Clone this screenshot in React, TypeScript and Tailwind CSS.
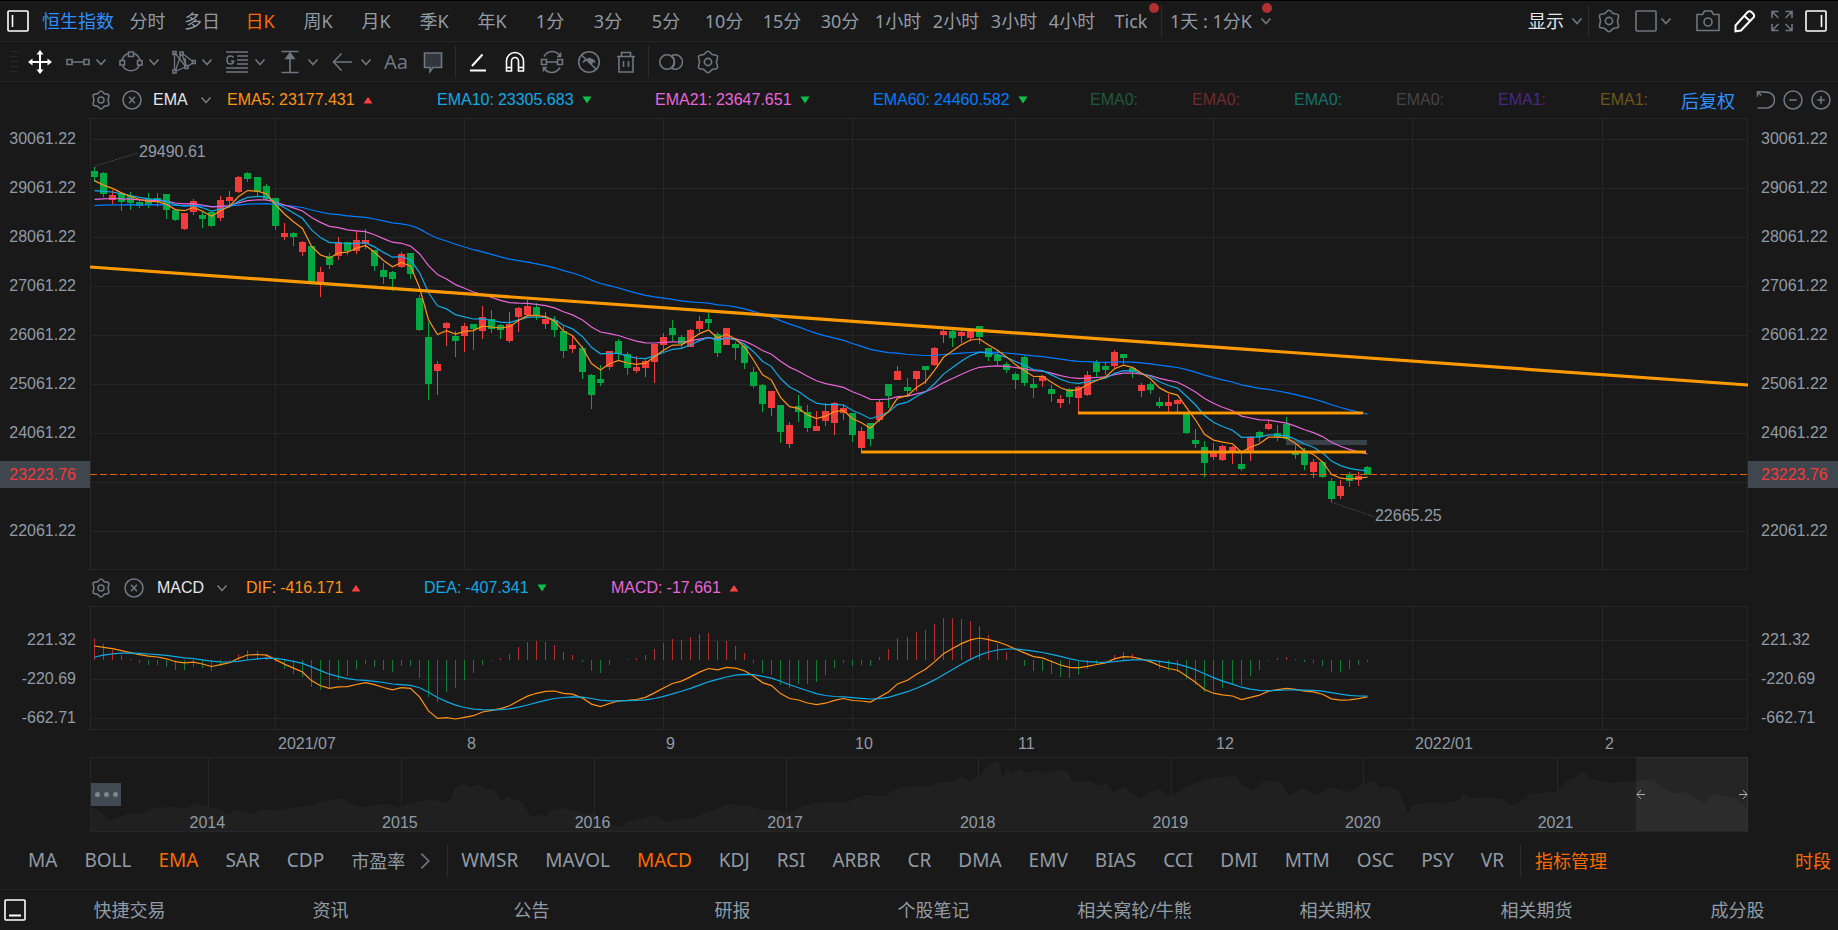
import type { ReactNode } from "react";

type Candle = [dir: "r" | "g", high: number, top: number, bottom: number, low: number];

const CANDLES: Candle[] = [
  ["g", 167, 171, 177, 182], ["g", 172, 173, 194, 197], ["r", 190, 195, 200, 204], ["g", 192, 193, 202, 211],
  ["g", 192, 196, 203, 210], ["g", 199, 202, 206, 208], ["g", 193, 199, 205, 208], ["g", 193, 198, 202, 207],
  ["g", 194, 194, 210, 219], ["g", 209, 210, 220, 221], ["r", 213, 213, 229, 230], ["r", 199, 201, 212, 215],
  ["g", 211, 215, 219, 228], ["g", 211, 212, 226, 227], ["r", 196, 200, 218, 221], ["r", 191, 197, 201, 205],
  ["r", 176, 177, 192, 193], ["g", 172, 173, 179, 182], ["g", 177, 177, 192, 197], ["g", 184, 186, 199, 201],
  ["g", 198, 198, 226, 230], ["r", 223, 233, 237, 240], ["g", 232, 233, 237, 246], ["r", 241, 242, 252, 256],
  ["g", 246, 246, 282, 282], ["r", 267, 272, 282, 297], ["g", 253, 256, 265, 269], ["r", 237, 242, 256, 260],
  ["g", 242, 242, 251, 255], ["r", 231, 240, 251, 254], ["r", 229, 240, 244, 249], ["g", 250, 250, 266, 271],
  ["g", 263, 270, 277, 284], ["g", 271, 272, 279, 291], ["r", 252, 254, 267, 268], ["g", 253, 253, 274, 279],
  ["g", 295, 298, 330, 331], ["g", 322, 337, 384, 400], ["r", 361, 364, 371, 395], ["r", 322, 323, 328, 346],
  ["g", 331, 336, 341, 357], ["r", 323, 326, 336, 352], ["g", 324, 324, 329, 350], ["r", 306, 317, 331, 339],
  ["g", 310, 319, 329, 333], ["g", 324, 325, 330, 339], ["r", 312, 324, 341, 343], ["r", 307, 308, 317, 332],
  ["r", 300, 306, 315, 316], ["g", 303, 307, 315, 320], ["r", 312, 319, 324, 329], ["g", 316, 320, 330, 337],
  ["g", 325, 331, 351, 358], ["r", 336, 345, 349, 353], ["g", 346, 348, 372, 379], ["g", 374, 375, 395, 409],
  ["g", 365, 379, 383, 386], ["r", 351, 351, 367, 370], ["g", 339, 341, 354, 361], ["g", 352, 354, 368, 375],
  ["r", 356, 367, 371, 373], ["r", 358, 361, 368, 377], ["r", 344, 344, 362, 383], ["r", 333, 337, 345, 352],
  ["g", 320, 328, 335, 341], ["g", 335, 337, 344, 348], ["r", 329, 330, 347, 347], ["r", 316, 321, 329, 332],
  ["g", 313, 319, 323, 330], ["g", 332, 334, 353, 357], ["r", 328, 328, 345, 345], ["g", 342, 344, 348, 360],
  ["g", 344, 346, 363, 369], ["g", 367, 372, 386, 388], ["g", 384, 385, 404, 412], ["r", 391, 391, 408, 416],
  ["g", 405, 405, 432, 443], ["r", 422, 425, 444, 448], ["g", 395, 406, 412, 422], ["g", 405, 412, 428, 432],
  ["r", 411, 426, 431, 431], ["r", 403, 411, 421, 426], ["r", 402, 403, 423, 435], ["r", 404, 408, 413, 420],
  ["g", 413, 413, 435, 442], ["r", 427, 431, 448, 453], ["g", 423, 423, 439, 446], ["r", 400, 402, 420, 422],
  ["g", 384, 384, 396, 408], ["r", 366, 371, 380, 380], ["g", 378, 387, 391, 395], ["r", 371, 371, 379, 391],
  ["g", 366, 366, 370, 384], ["r", 347, 348, 365, 366], ["r", 329, 331, 335, 343], ["g", 330, 331, 338, 347],
  ["r", 330, 332, 336, 343], ["r", 330, 331, 338, 341], ["g", 326, 326, 337, 344], ["g", 348, 348, 357, 361],
  ["g", 351, 355, 361, 365], ["g", 362, 364, 370, 373], ["g", 372, 374, 380, 389], ["g", 356, 357, 383, 386],
  ["g", 378, 384, 388, 398], ["r", 375, 376, 381, 387], ["g", 385, 389, 394, 402], ["r", 395, 399, 403, 408],
  ["g", 388, 389, 397, 404], ["r", 386, 387, 398, 413], ["r", 371, 375, 395, 396], ["g", 360, 362, 372, 377],
  ["g", 363, 366, 370, 375], ["r", 350, 352, 366, 368], ["g", 354, 354, 358, 364], ["g", 367, 368, 372, 378],
  ["r", 383, 385, 391, 397], ["g", 382, 384, 390, 394], ["g", 397, 402, 406, 408], ["r", 394, 402, 406, 412],
  ["r", 399, 400, 404, 412], ["g", 412, 412, 433, 434], ["g", 429, 440, 444, 448], ["g", 441, 447, 463, 477],
  ["r", 443, 452, 457, 460], ["r", 445, 446, 460, 461], ["r", 446, 447, 453, 464], ["g", 453, 464, 469, 471],
  ["r", 436, 437, 452, 461], ["g", 431, 432, 437, 442], ["r", 421, 424, 429, 430], ["g", 425, 433, 437, 441],
  ["g", 417, 424, 439, 440], ["g", 445, 453, 455, 459], ["g", 448, 453, 465, 470], ["r", 459, 462, 472, 478],
  ["g", 461, 462, 477, 478], ["g", 478, 481, 499, 502], ["r", 480, 486, 496, 499], ["g", 472, 474, 481, 487],
  ["r", 472, 476, 480, 486], ["g", 466, 467, 475, 475],
];

const NAV_POINTS =
  "91,808 97,809 104,815 110,821 119,817 134,812 142,814 152,808 170,807 186,808 196,803 210,807 221,809 227,814 235,810 245,811 251,815 263,809 277,811 289,808 314,805 322,801 342,798 350,803 360,807 372,805 391,804 397,808 405,805 419,801 435,800 443,803 451,800 455,788 463,783 471,787 478,784 484,788 494,790 502,802 508,797 522,802 530,815 534,818 538,813 546,817 550,810 561,808 573,810 585,813 593,812 601,820 612,825 620,827 628,822 640,818 657,816 665,822 679,819 693,819 703,813 719,808 728,804 746,805 762,810 778,810 786,813 798,808 813,803 845,802 865,795 885,796 900,787 928,786 940,782 952,782 961,776 970,781 980,775 990,764 996,761 1000,765 1002,778 1007,769 1013,774 1019,768 1027,773 1034,770 1047,773 1055,770 1067,771 1072,780 1081,782 1090,781 1097,785 1106,784 1114,792 1124,786 1132,793 1140,799 1148,793 1160,789 1171,797 1185,787 1197,782 1218,777 1236,776 1242,785 1253,790 1265,780 1281,782 1289,796 1303,788 1315,795 1333,787 1346,792 1354,790 1362,784 1374,781 1380,788 1388,786 1400,792 1404,803 1408,813 1412,805 1433,802 1443,804 1459,800 1463,793 1471,798 1491,797 1503,799 1511,805 1526,799 1530,793 1556,792 1566,782 1576,777 1583,771 1590,778 1607,783 1633,781 1653,779 1661,787 1673,793 1685,792 1704,803 1714,794 1734,797 1748,809";

const MONTH_LINES = [275, 464, 663, 852, 1015, 1213, 1412, 1602];
const MONTHS = ["2021/07", "8", "9", "10", "11", "12", "2022/01", "2"];
const PRICE_LINES = [139, 188, 237, 286, 335, 384, 433, 482, 531];
const PRICES = ["30061.22", "29061.22", "28061.22", "27061.22", "26061.22", "25061.22", "24061.22"];
const YEARS = ["2014", "2015", "2016", "2017", "2018", "2019", "2020", "2021"];
const YEAR_LINES = [208, 401, 594, 786, 978, 1171, 1363, 1557];

const PERIODS = [
  "多日", "日K", "周K", "月K", "季K", "年K", "1分", "3分", "5分", "10分", "15分", "30分",
  "1小时", "2小时", "3小时", "4小时",
];
const MAIN_INDICATORS = ["MA", "BOLL", "EMA", "SAR", "CDP"];
const SUB_INDICATORS = [
  "WMSR", "MAVOL", "MACD", "KDJ", "RSI", "ARBR", "CR", "DMA", "EMV", "BIAS", "CCI", "DMI", "MTM",
  "OSC", "PSY", "VR",
];
const PANELS = [
  "快捷交易", "资讯", "公告", "研报", "个股笔记", "相关窝轮/牛熊", "相关期权", "相关期货", "成分股",
];

const candleX = (i: number) => 94 + 9 * i + Math.floor((i + 18) / 36);
const closes = CANDLES.map(([dir, , top, bottom]) => (dir === "r" ? top : bottom));

function ema(values: number[], period: number, first: number) {
  const k = 2 / (period + 1);
  const out = [first];
  for (let i = 1; i < values.length; i++) {
    out.push(out[i - 1] + (values[i] - out[i - 1]) * k);
  }
  return out;
}

const toPoints = (ys: number[]) => ys.map((y, i) => `${candleX(i) + 0.5},${y.toFixed(1)}`).join(" ");

// MACD runs on the candle scale and is then stretched to its own pane
const MACD_ZERO = 660;
const MACD_SCALE = 1.812;
const ema12 = ema(closes, 12, 192.4);
const ema26 = ema(closes, 26, 200.1);
const dif = ema12.map((v, i) => (v - ema26[i]) * MACD_SCALE);
const dea = ema(dif, 9, -3);

function Svg({ size = 24, className = "", children }: { size?: number; className?: string; children: ReactNode }) {
  return (
    <svg
      width={size}
      height={size}
      viewBox="0 0 24 24"
      fill="none"
      stroke="currentColor"
      strokeWidth={size < 24 ? 1.9 : 1.6}
      className={`shrink-0 ${className}`}
      aria-hidden="true"
    >
      {children}
    </svg>
  );
}

function Chevron() {
  return (
    <svg width="12" height="12" viewBox="0 0 12 12" fill="none" stroke="#6f7680" strokeWidth="1.7" className="shrink-0" aria-hidden="true">
      <path d="M1.5 3.500 6 8.500l4.500-5" />
    </svg>
  );
}

function Gear({ size = 24 }: { size?: number }) {
  return (
    <Svg size={size}>
      <path d="M12 1.2c2 0 2.6 2.4 4.3 3.3 1.7.9 4-.1 5 1.5 1 1.700-.8 3.600-.8 6s1.800 4.300.8 6c-1 1.600-3.300.6-5 1.500-1.700.9-2.300 3.300-4.300 3.300s-2.600-2.400-4.300-3.300c-1.700-.9-4 .1-5-1.500-1-1.700.8-3.600.8-6s-1.800-4.300-.8-6c1-1.600 3.300-.6 5-1.500C9.400 3.600 10 1.200 12 1.200Z" />
      <circle cx="12" cy="12" r="3.600" />
    </Svg>
  );
}

function PanelIcon({ children }: { children?: ReactNode }) {
  return (
    <Svg>
      <rect x="2" y="2" width="20" height="20" rx="1" />
      {children}
    </Svg>
  );
}

function CloseIcon() {
  return (
    <Svg size={20}>
      <circle cx="12" cy="12" r="10.800" />
      <path d="m8.500 8 7 8m0-8-7 8" />
    </Svg>
  );
}

function Tool({ label, active, children }: { label: string; active?: boolean; children: ReactNode }) {
  return (
    <button aria-label={label} className={active ? "text-white" : "text-[#6f7680]"}>
      {children}
    </button>
  );
}

function DrawMenu({ label, children }: { label: string; children: ReactNode }) {
  return (
    <button aria-label={label} className="flex items-center gap-[5px] text-[#6f7680]">
      <Svg>{children}</Svg>
      <Chevron />
    </button>
  );
}

function Trend({ up }: { up?: boolean }) {
  return (
    <svg width="10" height="8" viewBox="0 0 10 8" className="ml-1 shrink-0" aria-hidden="true">
      {up ? <path d="M5 1 9.500 7.500h-9z" fill="#ff4040" /> : <path d="M.5 .5h9L5 7.500z" fill="#0bc14c" />}
    </svg>
  );
}

function Reading({ name, value, up, className }: { name: string; value: string; up?: boolean; className: string }) {
  return (
    <div className={`flex shrink-0 items-center gap-1 ${className}`}>
      <span>{name}:</span>
      <span>{value}</span>
      <Trend up={up} />
    </div>
  );
}

function Separator() {
  return <span className="h-8 w-px shrink-0 bg-[#2b2b2b]" />;
}

function TopBar() {
  return (
    <nav className="flex h-[42px] items-center border-y border-t-black border-b-[#262626] text-lg">
      <button aria-label="左侧栏" className="ml-1.5 w-[36px] shrink-0 text-white">
        <PanelIcon>
          <path d="M6.500 6v12" />
        </PanelIcon>
      </button>
      <a href="#quote" className="shrink-0 text-[#2e8fff]">恒生指数</a>
      <button className="ml-2 w-[51px] shrink-0 text-center">分时</button>
      {PERIODS.map((period) => (
        <button
          key={period}
          className={`w-[58px] shrink-0 whitespace-nowrap text-center ${period === "日K" ? "text-[#ff6a00]" : ""}`}
        >
          {period}
        </button>
      ))}
      <button className="relative w-[60px] shrink-0 text-center">
        Tick
        <span className="absolute -top-1 right-0.5 size-2.5 rounded-full bg-[#b23030]" />
      </button>
      <Separator />
      <button className="relative ml-2 flex shrink-0 items-center gap-2 whitespace-nowrap">
        1天 : 1分K
        <Chevron />
        <span className="absolute -top-1 right-0 size-2.5 rounded-full bg-[#b23030]" />
      </button>
      <div className="ml-auto flex shrink-0 items-center pr-2.5">
        <button className="mr-[5px] flex items-center gap-[7px] text-[#e4e7ea]">
          显示
          <Chevron />
        </button>
        <Separator />
        <div className="ml-2 flex items-center text-[#6f7680]">
          <Tool label="设置"><Gear /></Tool>
          <button aria-label="窗口布局" className="ml-[13px] flex items-center gap-0.5">
            <PanelIcon />
            <Chevron />
          </button>
          <div className="ml-6 flex items-center gap-[13px]">
            <Tool label="截图">
              <Svg>
                <path d="M1 5.500h5.500L8.500 2h7l2 3.500H23v16H1z" />
                <circle cx="12" cy="13" r="4" />
              </Svg>
            </Tool>
            <Tool label="画线" active>
              <Svg>
                <path strokeWidth="2" d="M2.500 16.500 14.500 3.200q2-2 4.200 0l1.500 1.500q2 2 0 4L8 21.500l-5.500.800zM11.500 7l5.500 5" />
              </Svg>
            </Tool>
            <Tool label="全屏">
              <Svg>
                <path d="M2 9V2.500h6.500M2.500 3l6 6M15.500 2.500H22V9M21.500 3l-6 6M2 15v6.500h6.500M2.500 21l6-6M15.500 21.500H22V15M21.500 21l-6-6" />
              </Svg>
            </Tool>
          </div>
          <button aria-label="右侧栏" className="ml-2.5 text-white">
            <PanelIcon>
              <path d="M17.500 6v12" />
            </PanelIcon>
          </button>
        </div>
      </div>
    </nav>
  );
}

function DrawingToolbar() {
  return (
    <div className="flex h-10 items-center border-b border-[#262626]">
      <svg width="7" height="24" viewBox="0 0 7 24" className="ml-[11px] shrink-0" stroke="#2a2a2a" aria-hidden="true">
        <path d="M0 1.500h7M0 6.500h7M0 11.500h7M0 16.500h7M0 21.500h7" />
      </svg>
      <div className="ml-2.5 flex items-center gap-[14px]">
        <Tool label="移动" active>
          <Svg>
            <path strokeWidth="2" d="M12 3v18M3 12h18" />
            <path fill="currentColor" stroke="none" d="m12 0 3.500 4.500h-7zM12 24l3.500-4.500h-7zM0 12l4.500-3.500v7zM24 12l-4.500-3.500v7z" />
          </Svg>
        </Tool>
        <div className="flex items-center gap-3">
          <DrawMenu label="线段"><path d="M1 9.500h5v5H1zM18 9.500h5v5h-5zM6 12h12" /></DrawMenu>
          <DrawMenu label="形状">
            <path d="M9.500 3.200A9.800 9.800 0 0 0 3 10.500M14.500 3.200a9.800 9.800 0 0 1 6.500 7.300M3.500 15.500a9.500 9.500 0 0 0 17 0M9.500 2h5v4.500h-5zM1 10.500h4.500V15H1zM18.500 10.500H23V15h-4.500z" />
          </DrawMenu>
          <DrawMenu label="形态">
            <path strokeWidth="1.300" d="M2.500 3v17M3.500 20.500 9 4.500M3 3l11 14M10 4l4 12M4 21l9.500-4M10.500 3.500 21.500 12M15.500 16.500l6-4M14 16l-1-8" />
            <path d="M1 1.500h3v3H1zM1 20h3v3H1zM8 2h3v3H8zM13 15.500h3v3h-3zM20.500 10.500h3v3h-3z" />
          </DrawMenu>
          <DrawMenu label="黄金分割">
            <path d="M1 2h22M1 22h22M1 18h22M12 6h11M12 10h11M12 14h11M8.500 7.500Q7.500 6 5.500 6 2 6 2 10t3.500 4q3 0 3-3H6" />
          </DrawMenu>
          <DrawMenu label="测量">
            <path d="M3.500 1.500h17M3.500 22.500h17M12 5v17" />
            <path fill="currentColor" d="m12 3 4 5.500H8z" />
          </DrawMenu>
          <DrawMenu label="箭头"><path d="M10.500 3.500 2.500 12l8 8.500M2.500 12H21" /></DrawMenu>
          <button aria-label="文字" className="w-6 text-xl text-[#6f7680]">Aa</button>
        </div>
      </div>
      <div className="ml-[13px] flex items-center gap-2.5">
        <Tool label="注释">
          <Svg>
            <path fill="#33363b" d="M3.500 3h17v14.500H12l-3 4v-4H3.500z" />
          </Svg>
        </Tool>
        <Separator />
        <div className="flex items-center gap-[13px]">
          <Tool label="连续画线" active>
            <Svg>
              <path strokeWidth="2" d="M4 20.500h16M6 16 16.500 4.500" />
            </Svg>
          </Tool>
          <Tool label="磁吸" active>
            <Svg>
              <path d="M3.500 21V11a8.500 8.500 0 0 1 17 0v10h-5V11a3.500 3.500 0 0 0-7 0v10z M3.500 17.500h5M15.500 17.500h5" />
            </Svg>
          </Tool>
          <Tool label="同步">
            <Svg>
              <path d="M1.500 9.500h5v5h-5zM17.500 9.500h5v5h-5zM6.500 12h11M4 6.500q3-5 8-5t8 4.500M20.500 2.500V6.500H17M20 17.500q-3 5-8 5t-8-4.500M3.500 21.500v-4H7" />
            </Svg>
          </Tool>
          <Tool label="隐藏画线">
            <Svg>
              <circle cx="12" cy="12" r="10.300" />
              <path d="M4 4.500 20 20M6 12.500q1.500-2 3.500-3M18 12.500q-1-1.500-3-3" />
              <path fill="currentColor" d="M12 8.500a3.500 3.500 0 0 1 3.500 3.500l-1 1.500-4-4z" />
            </Svg>
          </Tool>
          <Tool label="删除">
            <Svg>
              <path d="M3 6.500h18M7.500 6V2.500h9V6M5 6.500v15.500h14V6.500M9.500 11v6M14.500 11v6" />
            </Svg>
          </Tool>
        </div>
        <Separator />
        <div className="flex items-center gap-[13px]">
          <Tool label="对比">
            <Svg>
              <circle cx="8" cy="12" r="7.200" />
              <path d="M12.500 5.800a7.200 7.200 0 1 1 0 12.400M12.500 5.800q3 2 3 6.200t-3 6.200" />
            </Svg>
          </Tool>
          <Tool label="画线设置"><Gear /></Tool>
        </div>
      </div>
    </div>
  );
}

function IndicatorName({ name, className }: { name: string; className: string }) {
  return (
    <div className={`flex shrink-0 items-center text-[#6f7680] ${className}`}>
      <Tool label={`${name} 设置`}><Gear size={20} /></Tool>
      <Tool label={`关闭 ${name}`}><CloseIcon /></Tool>
      <button className="flex items-center gap-3 text-[#e4e7ea]">
        {name}
        <Chevron />
      </button>
    </div>
  );
}

function EmaHeader() {
  return (
    <div className="flex h-9 items-center pl-[91px] font-['Liberation_Sans',sans-serif] text-base">
      <IndicatorName name="EMA" className="w-[136px] gap-[11px]" />
      <Reading name="EMA5" value="23177.431" up className="w-[210px] text-[#ff9214]" />
      <Reading name="EMA10" value="23305.683" className="w-[218px] text-[#0fa9e4]" />
      <Reading name="EMA21" value="23647.651" className="w-[218px] text-[#e766d8]" />
      <Reading name="EMA60" value="24460.582" className="w-[217px] text-[#007cff]" />
      <span className="w-[102px] text-[#1e5a3e]">EMA0:</span>
      <span className="w-[102px] text-[#702c2c]">EMA0:</span>
      <span className="w-[102px] text-[#14706c]">EMA0:</span>
      <span className="w-[102px] text-[#454545]">EMA0:</span>
      <span className="w-[102px] text-[#4a2785]">EMA1:</span>
      <span className="text-[#6b571b]">EMA1:</span>
      <div className="ml-auto flex shrink-0 items-center gap-3 pr-[7px]">
        <button className="mr-2 font-['Noto_Sans_CJK_SC',sans-serif] text-lg leading-6 text-[#2e8fff]">后复权</button>
        <Tool label="还原">
          <Svg size={20}>
            <path d="M9 2H3v6M3.500 2.500l4 4M9 2.500h5a9.500 9.500 0 0 1 0 19H3" />
          </Svg>
        </Tool>
        <div className="-ml-1 flex gap-2">
          <Tool label="缩小">
            <Svg size={20}>
              <circle cx="12" cy="12" r="10.800" />
              <path d="M7.500 12h9" />
            </Svg>
          </Tool>
          <Tool label="放大">
            <Svg size={20}>
              <circle cx="12" cy="12" r="10.800" />
              <path d="M7.500 12h9M12 7.500v9" />
            </Svg>
          </Tool>
        </div>
      </div>
    </div>
  );
}

function PriceAxis({ right }: { right?: boolean }) {
  const align = right ? "pl-[13px]" : "pr-[14px] text-right";
  return (
    <div className="w-[90px] shrink-0 pt-[11px] leading-5">
      <div className={`flex flex-col gap-[29px] ${align}`}>
        {PRICES.map((price) => (
          <span key={price}>{price}</span>
        ))}
      </div>
      <div className={`mt-[18px] bg-[#40464d] leading-[27px] text-[#f33b3b] ${align}`}>23223.76</div>
      <div className={`mt-[33px] ${align}`}>22061.22</div>
    </div>
  );
}

function PriceChart() {
  return (
    <div className="flex">
      <PriceAxis />
      <div className="relative min-w-0 flex-1">
        <svg viewBox="90 118 1658 452" preserveAspectRatio="none" className="block h-[452px] w-full" fill="none">
          <g stroke="#262626" shapeRendering="crispEdges">
            <rect x="90.5" y="118.5" width="1657" height="451" />
            {PRICE_LINES.map((y) => <path key={y} d={`M90 ${y + 0.5}H1748`} />)}
            {MONTH_LINES.map((x) => <path key={x} d={`M${x + 0.5} 118V570`} />)}
          </g>
          <rect x="1286" y="440" width="81" height="5" fill="#3a4249" />
          <g shapeRendering="crispEdges">
            {CANDLES.map(([dir, high, top, bottom, low], i) => {
              const color = dir === "r" ? "#f33b3b" : "#00a843";
              const x = candleX(i);
              return (
                <g key={x} fill={color}>
                  <rect x={x} y={high} width="1" height={low - high} />
                  <rect x={x - 3} y={top} width="7" height={bottom - top} />
                </g>
              );
            })}
          </g>
          <path d="M90 474.500H1748" stroke="#d9610f" strokeDasharray="7 3" />
          <g strokeWidth="1.200">
            <polyline points={toPoints(ema(closes, 60, 205.6))} stroke="#007cff" />
            <polyline points={toPoints(ema(closes, 21, 199.3))} stroke="#e766d8" />
            <polyline points={toPoints(ema(closes, 10, 190.7))} stroke="#0fa9e4" />
            <polyline points={toPoints(ema(closes, 5, 180.6))} stroke="#ff9214" />
          </g>
          <g stroke="#ff9900">
            <path d="M90 267 1748 385" strokeWidth="3.200" />
            <path d="M1078 413h285M861 452h505" strokeWidth="4" opacity=".45" />
            <path d="M1078 413h285M861 452h505" strokeWidth="2" />
          </g>
          <path d="m95 166 43-13M1331 502l44 15" stroke="#474747" strokeDasharray="2 1" />
        </svg>
        <span className="absolute top-6 left-[49px] leading-5">29490.61</span>
        <span className="absolute top-[388px] left-[77.5%] leading-5">22665.25</span>
      </div>
      <PriceAxis right />
    </div>
  );
}

function MacdAxis({ right }: { right?: boolean }) {
  return (
    <div className={`flex w-[90px] shrink-0 flex-col gap-[19px] pt-6 leading-5 ${right ? "pl-[13px]" : "pr-[14px] text-right"}`}>
      <span>221.32</span>
      <span>-220.69</span>
      <span>-662.71</span>
    </div>
  );
}

function MacdChart() {
  return (
    <>
      <div className="flex h-9 items-center pl-[91px]">
        <IndicatorName name="MACD" className="w-[155px] gap-[13px]" />
        <Reading name="DIF" value="-416.171" up className="w-[178px] text-[#ff9214]" />
        <Reading name="DEA" value="-407.341" className="w-[187px] text-[#0fa9e4]" />
        <Reading name="MACD" value="-17.661" up className="text-[#e766d8]" />
      </div>
      <div className="flex">
        <MacdAxis />
        <svg viewBox="90 606 1658 124" preserveAspectRatio="none" className="block h-[124px] min-w-0 flex-1" fill="none">
          <g stroke="#262626" shapeRendering="crispEdges">
            <rect x="90.5" y="606.5" width="1657" height="123" />
            <path d="M90 640.500H1748M90 679.500H1748M90 718.500H1748" />
            {MONTH_LINES.map((x) => <path key={x} d={`M${x + 0.5} 606V730`} />)}
          </g>
          <g shapeRendering="crispEdges">
            {dif.map((v, i) => {
              const bar = 2 * (v - dea[i]);
              return (
                <path
                  key={i}
                  d={`M${candleX(i) + 0.5} ${MACD_ZERO}v${bar.toFixed(0)}`}
                  stroke={bar < 0 ? "#b02e2e" : "#0c7a38"}
                />
              );
            })}
          </g>
          <g strokeWidth="1.200">
            <polyline points={toPoints(dif.map((v) => MACD_ZERO + v))} stroke="#ff9214" />
            <polyline points={toPoints(dea.map((v) => MACD_ZERO + v))} stroke="#0fa9e4" />
          </g>
        </svg>
        <MacdAxis right />
      </div>
      <div className="mx-[90px] grid h-[27px] grid-cols-[185fr_189fr_199fr_189fr_163fr_198fr_199fr_190fr_146fr] items-center leading-5">
        <span />
        {MONTHS.map((month) => (
          <span key={month} className="pl-[3px]">{month}</span>
        ))}
      </div>
    </>
  );
}

function Navigator() {
  return (
    <div className="relative mx-[90px]">
      <svg viewBox="90 757 1658 75" preserveAspectRatio="none" className="block h-[75px] w-full" fill="none">
        <g stroke="#262626" shapeRendering="crispEdges">
          {YEAR_LINES.map((x) => <path key={x} d={`M${x + 0.5} 757V832`} />)}
        </g>
        <polygon points={`90,832 ${NAV_POINTS} 1748,832`} fill="#202020" />
        <rect x="90.5" y="757.5" width="1657" height="74" stroke="#262626" shapeRendering="crispEdges" />
        <rect x="1636" y="757" width="112" height="74" fill="#fff" opacity=".055" />
        <path d="m1641 790-4 4.500 4 4.500M1637 794.500h8M1743 790l4 4.500-4 4.500M1747 794.500h-8" stroke="#a3abb3" />
      </svg>
      <div className="absolute inset-x-0 bottom-0 grid grid-cols-[210fr_repeat(8,1926fr)_962fr] text-center leading-[18px]">
        <span />
        {YEARS.map((year) => (
          <span key={year}>{year}</span>
        ))}
      </div>
      <button
        aria-label="更多"
        className="absolute top-[26px] left-px flex h-[23px] w-[30px] items-center justify-center gap-1 bg-[#414a53]"
      >
        <span className="size-[5px] rounded-full bg-[#7e868e]" />
        <span className="size-[5px] rounded-full bg-[#7e868e]" />
        <span className="size-[5px] rounded-full bg-[#7e868e]" />
      </button>
    </div>
  );
}

function IndicatorBar() {
  return (
    <div className="flex h-[58px] items-center border-b border-[#262626] px-[7px] text-[19px]">
      <div className="flex items-center gap-[27px] pl-[21px]">
        {MAIN_INDICATORS.map((name) => (
          <button key={name} className={name === "EMA" ? "text-[#ff6a00]" : ""}>{name}</button>
        ))}
        <button className="shrink-0 whitespace-nowrap text-lg">市盈率</button>
      </div>
      <button aria-label="更多指标" className="mx-[13px] text-[#6f7680]">
        <Svg size={16}>
          <path strokeWidth="2.500" d="m5 1 11 11L5 23" />
        </Svg>
      </button>
      <Separator />
      <div className="flex items-center gap-[27px] pr-4 pl-[13px]">
        {SUB_INDICATORS.map((name) => (
          <button key={name} className={name === "MACD" ? "text-[#ff6a00]" : ""}>{name}</button>
        ))}
      </div>
      <Separator />
      <button className="ml-3.5 shrink-0 text-lg text-[#ff6a00]">指标管理</button>
      <button className="ml-auto shrink-0 text-lg text-[#ff6a00]">时段</button>
    </div>
  );
}

function PanelTabs() {
  return (
    <footer className="flex h-10 items-center text-lg">
      <button aria-label="展开面板" className="w-[29px] shrink-0 pl-[3px] text-white">
        <PanelIcon>
          <path strokeWidth="2" d="M6 17.500h12" />
        </PanelIcon>
      </button>
      <div className="grid flex-1 grid-cols-9">
        {PANELS.map((panel) => (
          <button key={panel} className="whitespace-nowrap text-center">{panel}</button>
        ))}
      </div>
    </footer>
  );
}

export default function App() {
  return (
    <div className="min-h-screen overflow-hidden bg-[#191919] font-['Noto_Sans','Noto_Sans_CJK_SC',sans-serif] text-[#919ba5]">
      <TopBar />
      <DrawingToolbar />
      <EmaHeader />
      <main className="font-['Liberation_Sans',sans-serif] text-base">
        <PriceChart />
        <MacdChart />
        <Navigator />
      </main>
      <IndicatorBar />
      <PanelTabs />
    </div>
  );
}
